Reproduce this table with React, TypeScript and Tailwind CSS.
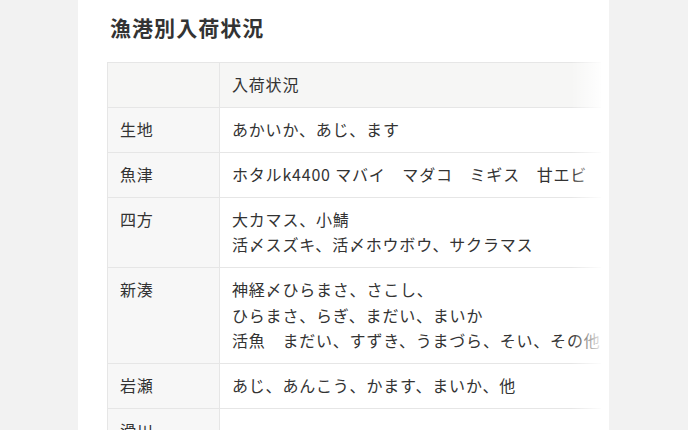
import React from "react";

type Row = { port: string; lines: string[] };

const rows: Row[] = [
  { port: "生地", lines: ["あかいか、あじ、ます"] },
  { port: "魚津", lines: ["ホタルk4400 マバイ　マダコ　ミギス　甘エビ"] },
  { port: "四方", lines: ["大カマス、小鯖", "活〆スズキ、活〆ホウボウ、サクラマス"] },
  {
    port: "新湊",
    lines: [
      "神経〆ひらまさ、さこし、",
      "ひらまさ、らぎ、まだい、まいか",
      "活魚　まだい、すずき、うまづら、そい、その他",
    ],
  },
  { port: "岩瀬", lines: ["あじ、あんこう、かます、まいか、他"] },
  { port: "滑川", lines: [""] },
];

export default function App() {
  return (
    <div
      className="min-h-screen bg-[#f2f2f2] text-[#333]"
      style={{ fontFamily: '"Noto Sans CJK JP", "Noto Sans", sans-serif' }}
    >
      <div className="ml-[78px] w-[531px] min-h-[430px] bg-white pt-[12px] pl-[29px]">
        <h2 className="ml-[3px] text-[21px] leading-[1.5] font-bold tracking-[0.05em] text-[#333]">
          漁港別入荷状況
        </h2>
        <div className="relative mt-[18px] w-[494px] overflow-hidden">
          <table className="min-w-[600px] border-collapse whitespace-nowrap text-[16px] leading-[25.5px] tracking-[0.05em]">
            <thead>
              <tr className="bg-[#f6f6f5]">
                <th className="w-[112px] border border-[#e6e6e6] px-3 py-[9.25px] text-left font-normal"></th>
                <th className="border border-[#e6e6e6] px-3 py-[9.25px] text-left font-normal">
                  入荷状況
                </th>
              </tr>
            </thead>
            <tbody>
              {rows.map((row) => (
                <tr key={row.port}>
                  <th className="w-[112px] border border-[#e6e6e6] bg-[#f7f7f7] px-3 py-[9.25px] text-left align-top font-normal">
                    {row.port}
                  </th>
                  <td className="border border-[#e6e6e6] bg-white px-3 py-[9.25px] align-top">
                    {row.lines.map((line, i) => (
                      <div key={i}>{line || "\u00a0"}</div>
                    ))}
                  </td>
                </tr>
              ))}
            </tbody>
          </table>
          <div className="pointer-events-none absolute top-0 right-0 h-full w-[30px] bg-gradient-to-r from-white/0 to-white/90" />
        </div>
      </div>
    </div>
  );
}
